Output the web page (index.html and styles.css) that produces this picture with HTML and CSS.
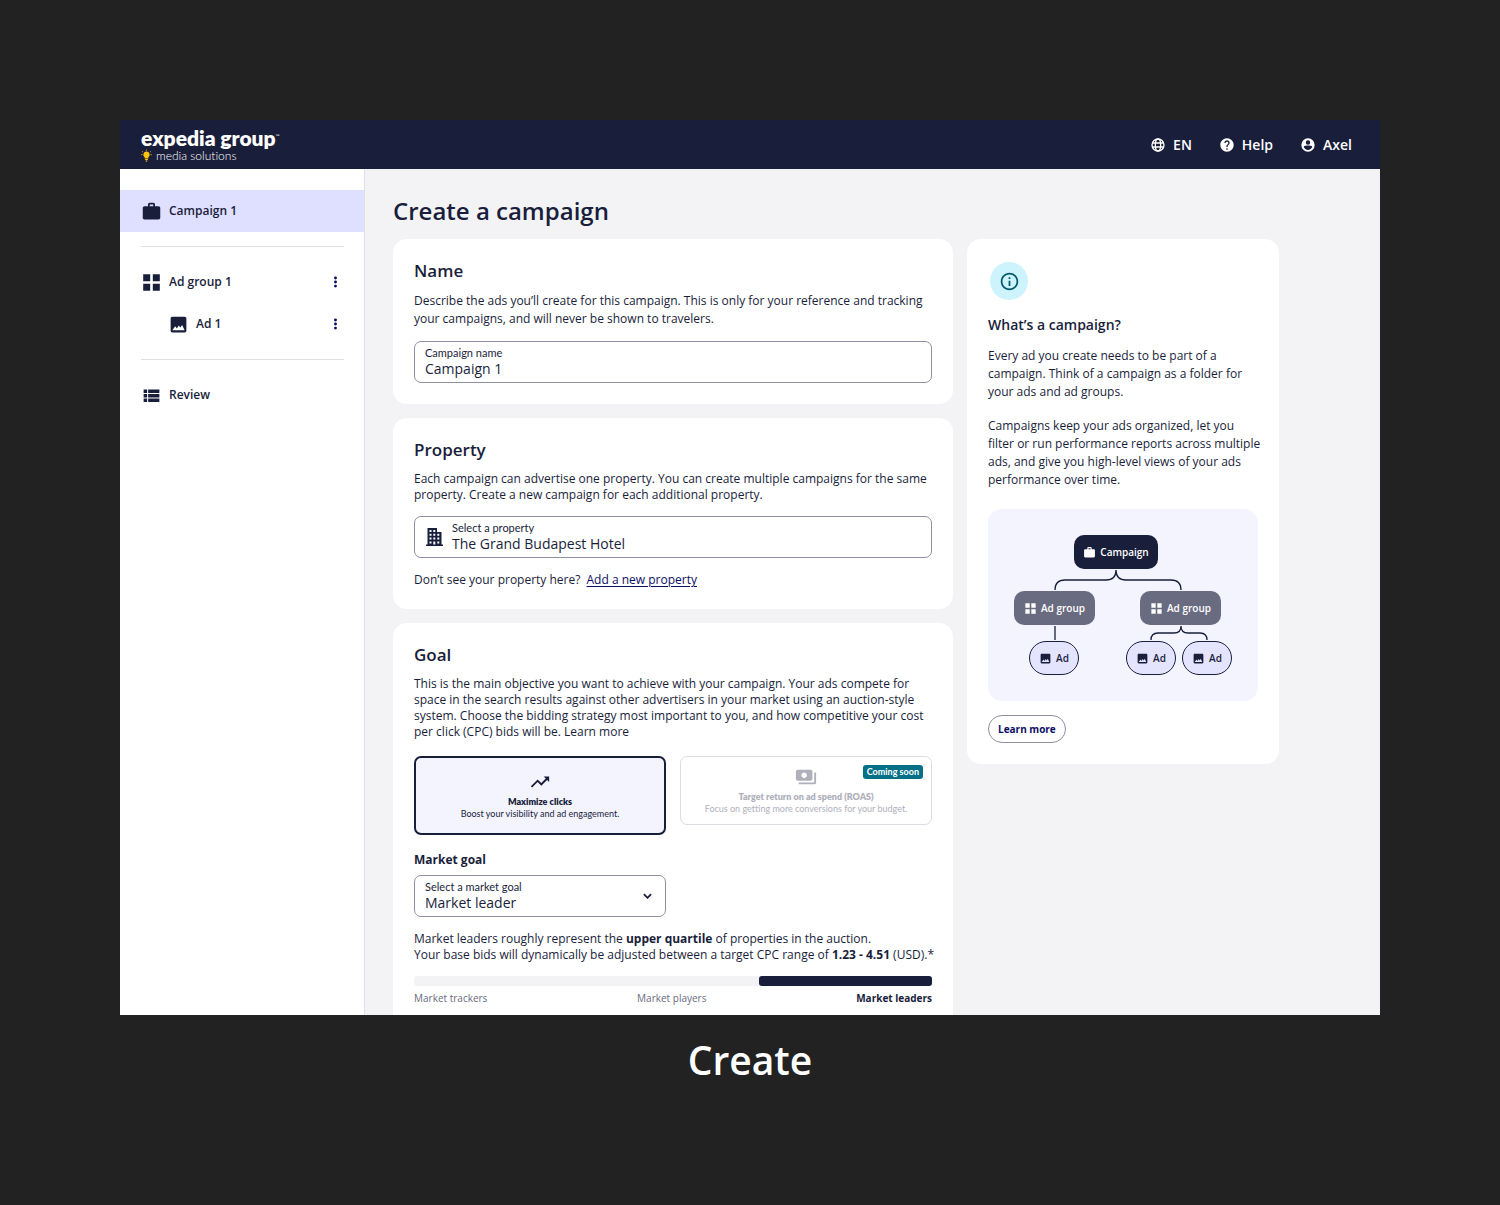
FILE: index.html
```html
<!DOCTYPE html>
<html lang="en">
<head>
<meta charset="utf-8">
<title>Create a campaign</title>
<link rel="stylesheet" href="styles.css">
</head>
<body>
<svg class="sprite" aria-hidden="true">
  <symbol id="work" viewBox="0 0 24 24"><path d="M20 6h-4V4c0-1.100-.9-2-2-2h-4c-1.100 0-2 .9-2 2v2H4c-1.100 0-2 .9-2 2v11c0 1.100.9 2 2 2h16c1.100 0 2-.9 2-2V8c0-1.100-.9-2-2-2zm-6 0h-4V4h4v2z"/></symbol>
  <symbol id="grid" viewBox="0 0 24 24"><path d="M2.500 2.500h8v8h-8zM13.500 2.500h8v8h-8zM2.500 13.500h8v8h-8zM13.500 13.500h8v8h-8z"/></symbol>
  <symbol id="image" viewBox="0 0 24 24"><path d="M21 19V5c0-1.100-.9-2-2-2H5c-1.100 0-2 .9-2 2v14c0 1.100.9 2 2 2h14c1.100 0 2-.9 2-2zM5 18.500l3.200-4.500 2 2.500 2-3.500 1.900 2.500 2-3 2.900 6z"/></symbol>
  <symbol id="list" viewBox="0 0 24 24"><path d="M3 5h4v4H3zM3 10.200h4v4H3zM3 15.400h4v4H3zM8.200 5H21v4H8.200zM8.200 10.200H21v4H8.200zM8.200 15.400H21v4H8.200z"/></symbol>
  <symbol id="more" viewBox="0 0 24 24"><circle cx="12" cy="5" r="2.500"/><circle cx="12" cy="12" r="2.500"/><circle cx="12" cy="19" r="2.500"/></symbol>
</svg>

<div class="app">
  <header class="topbar">
    <a class="brand" href="#" aria-label="expedia group media solutions">
      <span class="brand-name">expedia group<sup>™</sup></span>
      <span class="brand-sub">
        <svg class="bulb" viewBox="0 0 12 14" aria-hidden="true"><path fill="#fec50c" d="M6 2.200a3.400 3.400 0 0 0-2 6.200v1.400h4V8.400a3.400 3.400 0 0 0-2-6.200zM4.500 10.400h3v1h-3zM4.900 12h2.200l-.6 1.300h-1z"/><path stroke="#fec50c" stroke-width=".9" d="M6 0v1.200M1.200 2l1 .8M10.800 2l-1 .8M.3 5.500h1.400M10.300 5.500h1.400"/></svg>
        media solutions
      </span>
    </a>
    <nav class="top-links">
      <a href="#"><svg class="globe" viewBox="0 0 24 24" aria-hidden="true"><circle cx="12" cy="12" r="9"/><ellipse cx="12" cy="12" rx="4" ry="9"/><path d="M4 9h16M4 15h16"/></svg>EN</a>
      <a href="#"><svg viewBox="0 0 24 24" aria-hidden="true"><path d="M12 2C6.480 2 2 6.480 2 12s4.480 10 10 10 10-4.480 10-10S17.520 2 12 2zm1 17h-2v-2h2v2zm2.070-7.750l-.9.920C13.450 12.900 13 13.500 13 15h-2v-.5c0-1.100.45-2.100 1.170-2.830l1.240-1.260c.37-.36.590-.86.590-1.410 0-1.100-.9-2-2-2s-2 .9-2 2H8c0-2.210 1.790-4 4-4s4 1.790 4 4c0 .88-.36 1.680-.93 2.250z"/></svg>Help</a>
      <a href="#"><svg viewBox="0 0 24 24" aria-hidden="true"><path fill-rule="evenodd" d="M12 2a10 10 0 1 0 0 20 10 10 0 0 0 0-20zM12 5a3.300 3.300 0 1 1 0 6.600A3.300 3.300 0 0 1 12 5zM5.500 14.800C6.500 13 9.500 12.900 12 12.900s5.500.1 6.500 1.900c-1.100 2.700-3.500 4.700-6.500 4.700s-5.400-2-6.500-4.700z"/></svg>Axel</a>
    </nav>
  </header>

  <div class="body">
    <nav class="sidebar">
      <a class="nav-item current" href="#"><svg><use href="#work"/></svg>Campaign 1</a>
      <div class="nav-group">
        <div class="nav-row">
          <a class="nav-item" href="#"><svg><use href="#grid"/></svg>Ad group 1</a>
          <button class="more" type="button" aria-label="Ad group 1 options"><svg><use href="#more"/></svg></button>
        </div>
        <div class="nav-row nested">
          <a class="nav-item" href="#"><svg><use href="#image"/></svg>Ad 1</a>
          <button class="more" type="button" aria-label="Ad 1 options"><svg><use href="#more"/></svg></button>
        </div>
      </div>
      <a class="nav-item" href="#"><svg><use href="#list"/></svg>Review</a>
    </nav>

    <main class="main">
      <h1>Create a campaign</h1>
      <div class="columns">
        <form class="cards">
          <section class="card">
            <h2>Name</h2>
            <p class="roomy">Describe the ads you’ll create for this campaign. This is only for your reference and tracking<br>your campaigns, and will never be shown to travelers.</p>
            <div class="field">
              <div class="field-text">
                <label for="campaign-name">Campaign name</label>
                <input id="campaign-name" type="text" value="Campaign 1">
              </div>
            </div>
          </section>

          <section class="card">
            <h2>Property</h2>
            <p>Each campaign can advertise one property. You can create multiple campaigns for the same<br>property. Create a new campaign for each additional property.</p>
            <div class="field">
              <svg class="field-icon" viewBox="0 0 18 20" aria-hidden="true"><path fill-rule="evenodd" d="M2 1h9.500v4H16v12.500h1.500V19H.5v-1.500H2zM4 3v2h2V3zM7.800 3v2h2V3zM4 6.800v2h2v-2zM7.800 6.800v2h2v-2zM11.800 6.800v2h2v-2zM4 10.600v2h2v-2zM7.800 10.600v2h2v-2zM11.800 10.600v2h2v-2zM4 14.400v2h2v-2zM7.800 14.400v3.100h2v-3.100zM11.800 14.400v2h2v-2z"/></svg>
              <div class="field-text">
                <label for="property">Select a property</label>
                <input id="property" type="text" value="The Grand Budapest Hotel">
              </div>
            </div>
            <p class="hint">Don’t see your property here? <a href="#">Add a new property</a></p>
          </section>

          <section class="card last">
            <h2>Goal</h2>
            <p>This is the main objective you want to achieve with your campaign. Your ads compete for<br>space in the search results against other advertisers in your market using an auction-style<br>system. Choose the bidding strategy most important to you, and how competitive your cost<br>per click (CPC) bids will be. <a href="#">Learn more</a></p>
            <div class="options">
              <label class="option selected">
                <input type="radio" name="goal" checked>
                <svg viewBox="0 0 24 24" aria-hidden="true"><path d="M16 6l2.290 2.290-4.880 4.880-4-4L2 16.590 3.410 18l6-6 4 4 6.300-6.290L22 12V6z"/></svg>
                <strong>Maximize clicks</strong>
                <span>Boost your visibility and ad engagement.</span>
              </label>
              <label class="option disabled">
                <input type="radio" name="goal" disabled>
                <svg viewBox="0 0 24 24" aria-hidden="true"><path d="M19 14V6c0-1.100-.9-2-2-2H3c-1.100 0-2 .9-2 2v8c0 1.100.9 2 2 2h14c1.100 0 2-.9 2-2zm-9-1c-1.660 0-3-1.340-3-3s1.340-3 3-3 3 1.340 3 3-1.340 3-3 3zm13-6v11c0 1.100-.9 2-2 2H4v-2h17V7h2z"/></svg>
                <strong>Target return on ad spend (ROAS)</strong>
                <span>Focus on getting more conversions for your budget.</span>
                <em class="badge">Coming soon</em>
              </label>
            </div>
            <h3>Market goal</h3>
            <div class="field half">
              <div class="field-text">
                <label for="market-goal">Select a market goal</label>
                <select id="market-goal"><option>Market leader</option><option>Market player</option><option>Market tracker</option></select>
              </div>
              <svg class="chevron" viewBox="0 0 10 6" aria-hidden="true"><path d="M1 1l4 4 4-4"/></svg>
            </div>
            <p class="summary">Market leaders roughly represent the <b>upper quartile</b> of properties in the auction.<br>Your base bids will dynamically be adjusted between a target CPC range of <b>1.23 - 4.51</b> (USD).*</p>
            <div class="scale"><div class="scale-fill"></div></div>
            <div class="scale-labels"><span>Market trackers</span><span>Market players</span><b>Market leaders</b></div>
          </section>
        </form>

        <aside class="card info">
          <div class="info-icon"><svg viewBox="0 0 24 24" aria-hidden="true"><path d="M11 7h2v2h-2zm0 4h2v6h-2zm1-9C6.480 2 2 6.480 2 12s4.480 10 10 10 10-4.480 10-10S17.520 2 12 2zm0 18c-4.410 0-8-3.590-8-8s3.590-8 8-8 8 3.590 8 8-3.590 8-8 8z"/></svg></div>
          <h3>What’s a campaign?</h3>
          <p class="roomy">Every ad you create needs to be part of a<br>campaign. Think of a campaign as a folder for<br>your ads and ad groups.</p>
          <p class="roomy">Campaigns keep your ads organized, let you<br>filter or run performance reports across multiple<br>ads, and give you high-level views of your ads<br>performance over time.</p>
          <div class="diagram">
            <div class="tree">
              <svg class="wires" viewBox="0 0 218 140" aria-hidden="true"><path d="M102 35q0 10-10 10H51q-10 0-10 10M102 35q0 10 10 10h45q10 0 10 10M41 91v14M167 91q0 7-7 7h-16q-7 0-7 7M167 91q0 7 7 7h12q7 0 7 7"/></svg>
              <div class="node root"><svg><use href="#work"/></svg>Campaign</div>
              <div class="node group g1"><svg><use href="#grid"/></svg>Ad group</div>
              <div class="node group g2"><svg><use href="#grid"/></svg>Ad group</div>
              <div class="node ad a1"><svg><use href="#image"/></svg>Ad</div>
              <div class="node ad a2"><svg><use href="#image"/></svg>Ad</div>
              <div class="node ad a3"><svg><use href="#image"/></svg>Ad</div>
            </div>
          </div>
          <button class="pill" type="button">Learn more</button>
        </aside>
      </div>
    </main>
  </div>
</div>
<p class="caption">Create</p>
</body>
</html>
```
FILE: styles.css
```css
* { box-sizing: border-box; }
body {
  margin: 0;
  padding: 120px 120px 0;
  background: #222;
  color: #191e3b;
  font-family: "Open Sans", sans-serif;
  font-size: 12px;
  line-height: 16px;
}
h1, h2, h3, p { margin: 0; }
b, strong { font-weight: 700; }
a { color: inherit; text-decoration: none; }
svg { fill: currentColor; flex: none; }
.sprite { display: none; }
input, select, button { font: inherit; color: inherit; }

.topbar {
  display: flex;
  justify-content: space-between;
  align-items: center;
  height: 49px;
  padding: 0 28px 0 21px;
  background: #191e3b;
  color: #fff;
}
.brand { display: flex; flex-direction: column; font-family: Lato, sans-serif; font-variant-ligatures: none; }
.brand-name { font-size: 21px; font-weight: 800; line-height: 22px; }
.brand-name sup { font-size: 5px; font-weight: 400; line-height: 1px; vertical-align: 8px; }
.brand-sub { display: flex; align-items: center; gap: 4px; font-size: 12px; font-weight: 300; line-height: 14px; }
.bulb { width: 11px; height: 14px; }
.top-links { display: flex; gap: 27px; font-size: 14px; font-weight: 600; }
.top-links a { display: flex; align-items: center; gap: 7px; }
.top-links svg { width: 16px; height: 16px; }
.top-links .globe { fill: none; stroke: currentColor; stroke-width: 2; }

.body { display: flex; background: #f3f3f5; }
.sidebar {
  flex: none;
  width: 245px;
  padding-top: 21px;
  background: #fff;
  border-right: 1px solid #dfe0e4;
  font-weight: 600;
}
.nav-item { display: flex; flex: 1; align-items: center; gap: 7px; height: 42px; padding-left: 21px; }
.nav-item svg { width: 21px; height: 21px; }
.current { background: #dfe0ff; }
.nav-group {
  margin: 14px 20px 14px 21px;
  padding: 14px 0;
  border: solid #dfe0e4;
  border-width: 1px 0;
}
.nav-row { display: flex; align-items: center; }
.nav-row .nav-item { padding-left: 0; }
.nested .nav-item { padding-left: 27px; }
.more { display: flex; padding: 0; border: 0; background: none; color: #0c0e63; }
.more svg { width: 17px; height: 14px; }

.main { flex: 1; min-width: 0; padding: 27px 28px 0; }
h1 { margin-bottom: 13px; font-size: 24px; font-weight: 600; line-height: 30px; }
.columns { display: grid; grid-template-columns: minmax(0, 560px) 312px; gap: 14px; align-items: start; }
.cards { display: grid; grid-template-columns: minmax(0, 1fr); gap: 14px; }
.card { padding: 21px; border-radius: 14px; background: #fff; }
.last { padding-bottom: 9px; border-radius: 14px 14px 0 0; }
h2 { margin-bottom: 10px; font-size: 17px; font-weight: 600; line-height: 22px; }
.card p { white-space: nowrap; }
.card .roomy { line-height: 18px; }

.field {
  display: flex;
  align-items: center;
  gap: 8px;
  height: 42px;
  margin-top: 13px;
  padding: 0 10px;
  border: 1px solid #8e90a3;
  border-radius: 7px;
}
.field-text { display: flex; flex: 1; flex-direction: column; }
.field label { font-family: Lato, sans-serif; font-size: 11px; line-height: 14px; }
.field input, .field select {
  width: 100%;
  height: 18px;
  padding: 0;
  border: 0;
  background: none;
  font-size: 14px;
  line-height: 18px;
  appearance: none;
}
.field-icon { width: 19px; height: 20px; }
.chevron { width: 9px; height: 6px; margin-right: 3px; fill: none; stroke: currentColor; stroke-width: 2; }
.field.half { width: calc(50% - 7px); margin-top: 7px; }
.hint { margin-top: 14px; }
.hint a { margin-left: 3px; color: #0c0e63; text-decoration: underline; text-underline-offset: 2px; }

.options { display: grid; grid-template-columns: 1fr 1fr; gap: 14px; align-items: start; margin: 16px 0 17px; }
.option {
  position: relative;
  display: flex;
  flex-direction: column;
  align-items: center;
  padding: 9px;
  border: 1px solid #dcdde2;
  border-radius: 7px;
  font-family: Lato, sans-serif;
  font-size: 9px;
  font-variant-ligatures: none;
  line-height: 12px;
}
.option input { position: absolute; opacity: 0; }
.option svg { width: 22px; height: 22px; margin-bottom: 3px; }
.option strong { font-weight: 800; }
.selected { padding: 13px; border: 2px solid #191e3b; background: #f4f4ff; }
.disabled { color: #afb0bb; }
.badge {
  position: absolute;
  top: 8px;
  right: 8px;
  padding: 1px 4px;
  border-radius: 3px;
  background: #057188;
  color: #fff;
  font-style: normal;
  font-weight: 700;
}
h3 { font-size: 12px; font-weight: 700; line-height: 16px; }
.summary { margin-top: 14px; }
.scale { height: 10px; margin-top: 13px; border-radius: 3px; background: #f3f3f5; }
.scale-fill { width: 33.4%; height: 100%; margin-left: auto; border-radius: 3px; background: #191e3b; }
.scale-labels { display: flex; justify-content: space-between; margin-top: 4px; font-size: 10px; }
.scale-labels span { color: #696b80; }

.info-icon {
  display: flex;
  align-items: center;
  justify-content: center;
  width: 38px;
  height: 38px;
  margin: 2px;
  border-radius: 50%;
  background: #cdf4fc;
  color: #06596b;
}
.info-icon svg { width: 21px; height: 21px; }
.info h3 { margin: 17px 0 14px; font-size: 14px; font-weight: 600; }
.info p + p { margin-top: 16px; }
.diagram { display: flex; justify-content: center; margin: 20px 0 14px; padding: 26px 0; border-radius: 14px; background: #f4f4ff; }
.tree { position: relative; width: 218px; height: 140px; }
.wires { position: absolute; inset: 0; fill: none; stroke: #191e3b; stroke-width: 1.3; }
.node {
  position: absolute;
  display: flex;
  align-items: center;
  justify-content: center;
  gap: 4px;
  height: 34px;
  border-radius: 10px;
  font-size: 10px;
  font-weight: 600;
}
.node svg { width: 13px; height: 13px; }
.root { left: 60px; top: 0; width: 84px; background: #191e3b; color: #fff; }
.group { top: 56px; width: 81px; background: #696b80; color: #fff; }
.ad { top: 106px; width: 50px; border: 1px solid #191e3b; border-radius: 17px; background: #e4e4ff; }
.g1 { left: 0; }
.g2 { left: 126px; }
.a1 { left: 15px; }
.a2 { left: 112px; }
.a3 { left: 168px; }
.pill {
  height: 28px;
  padding: 0 9px;
  border: 1px solid #8e90a3;
  border-radius: 14px;
  background: #fff;
  color: #0c0e63;
  font-size: 10px;
  font-weight: 700;
}
.caption { margin: 21px 0; color: #fff; font-size: 39px; font-weight: 600; line-height: 48px; text-align: center; }
```
